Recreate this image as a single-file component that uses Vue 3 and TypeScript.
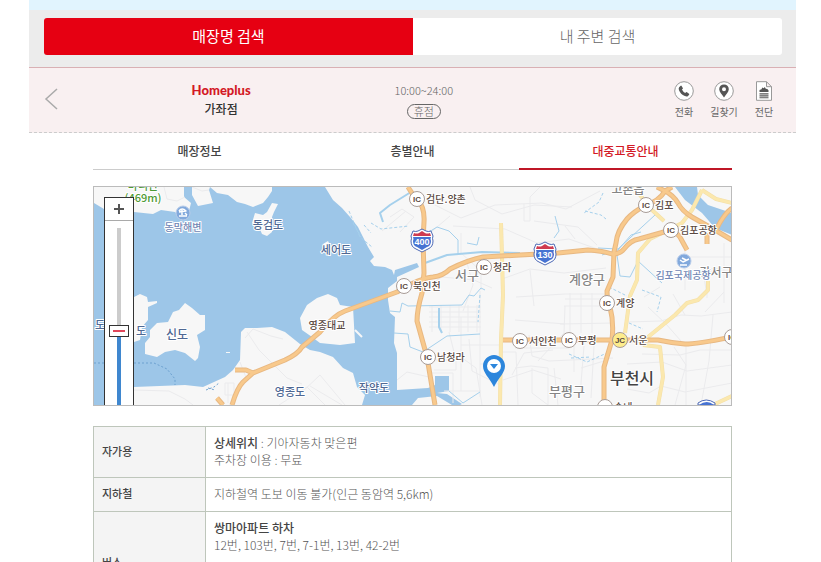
<script setup lang="ts">
import { ref } from 'vue'

interface MapLabel {
  text: string
  x: number
  y: number
  size: number
  kind: string
}

interface Junction {
  code: string
  name: string
  x: number
  y: number
}

interface TransitRow {
  heading: string
  title?: string
  inline?: string
  lines: string[]
  tall?: boolean
}

const searchTabs: string[] = ['매장명 검색', '내 주변 검색']
const activeSearch = ref(0)

const infoTabs: string[] = ['매장정보', '층별안내', '대중교통안내']
const activeInfo = ref(2)

const zoomLevel = ref(50)

const labels: MapLabel[] = [
  { text: '마니산', x: 49, y: 3, size: 11, kind: 'peak' },
  { text: '(469m)', x: 49, y: 15, size: 11, kind: 'peak' },
  { text: '동막해변', x: 89, y: 44, size: 10, kind: 'spot' },
  { text: '동검도', x: 174, y: 42, size: 11, kind: 'isle' },
  { text: '세어도', x: 242, y: 67, size: 11, kind: 'isle' },
  { text: '도', x: 6, y: 142, size: 11, kind: 'isle' },
  { text: '도', x: 47, y: 148, size: 11, kind: 'isle' },
  { text: '신도', x: 83, y: 152, size: 12, kind: 'isle' },
  { text: '영종도', x: 196, y: 209, size: 11, kind: 'isle' },
  { text: '작약도', x: 280, y: 205, size: 11, kind: 'isle' },
  { text: '영종대교', x: 233, y: 142, size: 10, kind: 'road' },
  { text: '서구', x: 373, y: 93, size: 13, kind: 'district' },
  { text: '고촌읍', x: 534, y: 7, size: 12, kind: 'district' },
  { text: '계양구', x: 493, y: 97, size: 13, kind: 'district' },
  { text: '강서구', x: 622, y: 90, size: 12, kind: 'district' },
  { text: '김포국제공항', x: 589, y: 92, size: 10, kind: 'spot' },
  { text: '부평구', x: 473, y: 209, size: 13, kind: 'district' },
  { text: '부천시', x: 538, y: 197, size: 16, kind: 'city' },
]

const junctions: Junction[] = [
  { code: 'IC', name: '검단.양촌', x: 323, y: 12 },
  { code: 'IC', name: '청라', x: 390, y: 80 },
  { code: 'IC', name: '북인천', x: 310, y: 99 },
  { code: 'IC', name: '남청라', x: 334, y: 170 },
  { code: 'IC', name: '김포', x: 552, y: 18 },
  { code: 'IC', name: '김포공항', x: 577, y: 43 },
  { code: 'IC', name: '계양', x: 513, y: 116 },
  { code: 'IC', name: '서인천', x: 426, y: 154 },
  { code: 'IC', name: '부평', x: 475, y: 153 },
  { code: 'JC', name: '서운', x: 526, y: 153 },
  { code: 'IC', name: '송내', x: 511, y: 220 },
  { code: 'IC', name: '', x: 638, y: 150 },
]

const rows: TransitRow[] = [
  { heading: '자가용', title: '상세위치', inline: ' : 기아자동차 맞은편', lines: ['주차장 이용 : 무료'] },
  { heading: '지하철', lines: ['지하철역 도보 이동 불가(인근 동암역 5,6km)'] },
  { heading: '버스', title: '쌍마아파트 하차', lines: ['12번, 103번, 7번, 7-1번, 13번, 42-2번'], tall: true },
]
</script>

<template>
  <main class="page">
    <div class="strip"></div>
    <nav class="search">
      <button
        v-for="(tab, i) in searchTabs"
        :key="tab"
        type="button"
        class="search-tab"
        :class="{ active: activeSearch === i }"
        @click="activeSearch = i"
      >{{ tab }}</button>
    </nav>

    <header class="store">
      <button type="button" class="back" aria-label="이전">
        <svg width="14" height="22" viewBox="0 0 14 22"><path d="M13 1 2 11l11 10" /></svg>
      </button>
      <div class="store-name">
        <span class="brand">Homeplus</span>
        <h1>가좌점</h1>
      </div>
      <div class="hours">
        <span>10:00~24:00</span>
        <span class="closed">휴점</span>
      </div>
      <div class="actions">
        <a href="#call">
          <svg width="20" height="20" viewBox="0 0 20 20">
            <circle class="ring" cx="10" cy="10" r="9.3" />
            <path class="solid" d="M5.1 6.2 6.7 4.7q.5-.3.9.2l1.2 2q.3.5-.2 1l-.7.7q1.2 2.4 3.3 3.4l.8-.7q.5-.4 1 0l2 1.5q.5.4.1.9l-1.1 1.2q-1 1-3.2.1-4.3-1.9-5.8-5.8-.7-2 .1-3z" />
          </svg>
          <span>전화</span>
        </a>
        <a href="#route">
          <svg width="20" height="20" viewBox="0 0 20 20">
            <circle class="ring" cx="10" cy="10" r="9.3" />
            <path class="solid" fill-rule="evenodd" d="M10 3.6c-2.8 0-4.8 2-4.8 4.6 0 2.8 2.8 5.2 4.8 8.3 2-3.1 4.8-5.500 4.800-8.300 0-2.600-2-4.600-4.800-4.600zm0 2.600a2 2 0 1 1 0 4 2 2 0 0 1 0-4z" />
          </svg>
          <span>길찾기</span>
        </a>
        <a href="#leaflet">
          <svg width="20" height="20" viewBox="0 0 20 20">
            <path class="ring" d="M2.5.7h10l5 5v13.600h-15zM12.500.7v5h5" />
            <path class="solid" d="M5.500 11V9l2-.7.8-1.800 1.500.8.900-1.300 1.300 2 1-.2 1.500 1.500V11zM5.500 12.200h9v1.200h-9zM5.500 14.200h9v1.200h-9zM5.500 16.200h9v1h-9z" />
          </svg>
          <span>전단</span>
        </a>
      </div>
    </header>

    <section class="content">
      <nav class="tabs">
        <button
          v-for="(tab, i) in infoTabs"
          :key="tab"
          type="button"
          :class="{ active: activeInfo === i }"
          @click="activeInfo = i"
        >{{ tab }}</button>
      </nav>

      <div class="map">
        <svg class="canvas" viewBox="0 0 638 218" preserveAspectRatio="xMinYMin slice">
          <rect class="land" width="638" height="218" />

          <path class="sea" d="M0 16 10 22 24 25 40 25 59 27 67 23 74 24 81 25 88 33 94 28 97 16 90 10 90 0H98L98 8 104 19 119 16 115 3 116 0 123 6 134 8 143 15 151 17 159 20 169 16 174 10 178 4 178 0H231L239 13 248 21 256 30 264 40 269 50 274 60 280 70 276 74 280 79 291 80 298 83 300 88 301 83 323 76 325 80 303 90 303 94 294 101 294 113 296 126 301 130 300 156 303 166 303 203 334 201 341 198V189H355V204L343 206 353 207 368 217 366 218H358L343 209 324 211 318 218H268L271 208 263 200 259 186 249 181 239 170 226 165 216 163 206 157 191 145 178 140 163 141 151 141 147 145 146 173 139 183 131 190 109 200 91 198 40 200 20 205 12 218H0z" />
          <path class="sea" d="M581 0 591 13 608 26 621 41 638 48V26L614 18 604 8 603 0z" />
          <path class="land" d="m91 116 7 5 8 7h5v15l-8 5 3 12-2 11-3 3-10-8-10-3-10 2-8 5-12-3v-11l5-6v-7l7-7 11-1 5-10 6-2zM40 110l6-3 7 3 1 5 9-1v2l-9 4v13l-6 7-2 13-6 2zM206 131l7-13 10-7 11-4 9 4 3 7 13 2 2 36-15 2-20-2-8-6-10-7zM184 17l-6-1-5 9-4 3-8-2-3 10 7 4 3 7 5 2 5-4v-15l2-5zM229 57l5-3 2 4-4 2zM132 165h4v1h-4z" />
          <path class="spit" d="m261 143 7 7" />

          <path class="lane" d="M98 0 108 4 115 3M70 0l3 12 10 2 8-4M40 203l35 1 16 8 8 6M146 175l7 18M151 151l8-9 18 7 12 3M153 145l12 18 28 28 15 6M134 196v20M131 196h9v12h-9zM185 218l28-18 18 18M206 207l20-19 25 30M216 199l32 19M296 30l12-8 12 8-14 15M288 44l24-20M303 193l10-8 22 5M334 186h25v30M340 173h22v10h-22M386 104v106M367 130v74M367 158h40M355 145l5 20 22 16 6 37M375 152l3 32 28 14M350 204h37M386 177h18M408 165h14l2 53M409 193l30-10 28 9M418 188l12-22 29-3M421 181l16-2 17 2v37M438 181v25l16 12M464 218l-4-37M333 14l34 17 34-13 47-2 24 6 34-18M376 0l5 13 27 14 32-9 38 2M430 17v17h6V10l10-10M336 46l20-17M359 39l52 3 32 14 32-4 34 12M440 34l44 6 19 18M471 39l10 13M367 46v20l20 18v19M373 76l6 22-10 26M408 92l28-10 34 4 42-5M436 83l4 36M332 100l16-10 32 3 18 8M422 110l49-3M471 107h42M471 112h42M476 106v40M487 106v40M498 106v40M470 119h42M466 137l54-1M471 119l-1 27-26 28M421 133l50 4M435 148l3 21 17 5 64-3M480 159v26M490 159l-4 50M500 159l-3 52M421 161h54M487 181l23-7M533 135l34-1 20-6 20 1 31-4M548 167l38 1 20-5h32M533 177l35-2 25 9 45-6M533 202l22 4 12-7 24 6 47-9M592 159v59M619 128l-4 46-8 44M580 160l12 18-11 40M554 120l18 17 15 17M550 110l16-10M591 128l-12-21M630 105l-19 20M612 103l-3-21 29-1M591 64v39M592 70h46M593 84h44M630 56v60M613 86v25" />
          <path class="lane" d="M335 120h52M335 125h52M335 130h52M335 135h52M335 140h52M338 118v27M347 118v27M356 118v27M365 118v27M374 118v27M383 118v27" />

          <path class="stream wide" d="m317 5-21 13-10 8 3 9M331 76l22-8 35-3 38 1M345 121v19l3 6" />
          <path class="stream" d="m296 124 10 1 2-9 6 3 54-1M300 146l14 1 2 13 13 5 9-6 15-10 33-2M355 204l14 12 17-11M368 118l7-10 5 1 7-8 4 2M335 45l8-5 12 4 9 9v15M373 56l10 2 2-8M504 61l20 1 37-34M508 68l16-5 13-15 10-3M523 68l3 21 10 1 8-16 24 22M461 29l4 15-5 7" />
          <path class="stream dash" d="M259 36l8 14M255 24l11 26 12 10M270 38l7 8M277 36l10 6 28-3M386 108l-2 27M509 6l-4 9-15 11M491 24l16 4 5 4M475 167l18 8 22-10M477 171l20-1M535 136l14 6M548 103l19 7-4 15M515 100l18 9" />
          <path class="ferry" d="M0 176h60l13 6 8 10v6M112 203l8-3 5-4M114 201l7 2" />

          <path class="yellow-case" d="m407 36 1 34 1 38-2 45-1 65M608 3l-10 20-10 13-20 10-12 6-12 14-1 27-7 16-5 37M554 150l27-22 12-12 11-3 10-10v-9M549 158l17 2 3 30-5 28M536 0l10 8 12 15 12 11M608 3l14 9 16 4M621 217l17-8" />
          <path class="yellow" d="m407 36 1 34 1 38-2 45-1 65M608 3l-10 20-10 13-20 10-12 6-12 14-1 27-7 16-5 37M554 150l27-22 12-12 11-3 10-10v-9M549 158l17 2 3 30-5 28M536 0l10 8 12 15 12 11M608 3l14 9 16 4M621 217l17-8" />
          <g v-for="layer in ['orange-case', 'orange']" :key="layer" :class="layer">
            <path d="M138 218q5-17 11-23l10-9 32-13q13-6 17-13l18-15q14-17 25-21l52-19q23-14 36-15 10-1 17-8 18-9 33-12l37-2 38-2 30-3q15 1 24 4 8 0 12-5 7-9 15-10l32-9q7 3 10 9l6 11" />
            <path d="M141 183h11l7 3M123 211l6 7M314 0q4 7 9 12 8 8 7 23l-1 18 1 33-2 20q-5 17-5 28l10 36 8 48" />
            <path d="m563 0 8 4q-6 10-19 14-13 7-19 14-10 12-11 24l-2 9-1 25-6 14q0 9 3 16 4 15 2 33l-8 27v38M578 0l-7 4q8 4 13 12 4 8 14 14l23 13 17 10M638 21q-8 6-15 20M613 46v11M409 153h155q14 3 27 4 12 0 47-7" />
          </g>

          <g v-for="shield in [{ no: '400', x: 328, y: 54 }, { no: '130', x: 451, y: 67 }]" :key="shield.no">
            <g :transform="`translate(${shield.x} ${shield.y})`">
              <path class="shield-edge" d="M-9-10q3 1 5 0l4-2 4 2q2 1 5 0l2 5q-1 2 0 5 0 6-5 8L0 11-6 8q-5-2-5-8 1-3 0-5z" />
              <path class="shield" d="M-9-4H9q-1 2 0 4 0 5-4 6L0 9-5 6q-4-1-4-6 1-2 0-4z" />
              <path class="shield-top" d="M-8-8q3 1 5 0l3-2 3 2q2 1 5 0l1 3H-9z" />
              <text class="shield-no" y="4">{{ shield.no }}</text>
            </g>
          </g>

          <circle class="poi" cx="89" cy="26" r="7" />
          <path class="poi-mark" d="M85 29h8M88 28v-5M85 24q3-4 7 0l-7 1M91 26l2 2" />
          <circle class="poi" cx="590" cy="74" r="7" />
          <path class="poi-mark" d="m586 73 3 2 6-3M588 71l4 2M586 78h7" />

          <text
            v-for="label in labels"
            :key="label.text + label.x"
            :x="label.x"
            :y="label.y"
            :font-size="label.size"
            class="label"
            :class="label.kind"
          >{{ label.text }}</text>

          <g v-for="j in junctions" :key="j.name + j.x">
            <circle class="junction" :class="{ jc: j.code === 'JC' }" :cx="j.x" :cy="j.y" r="7.5" />
            <text class="code" :x="j.x" :y="j.y + 3">{{ j.code }}</text>
            <text class="label road start" :x="j.x + 9" :y="j.y + 4" font-size="10">{{ j.name }}</text>
          </g>

          <path class="shield-edge" d="M604 218v-2q8-6 17 0v2z" />
          <path class="shield" d="M605 218q8-6 15 0z" />
          <path class="pin" d="M400 168c-6 0-11 5-11 11 0 7 6 11 11 21 5-10 11-14 11-21 0-6-5-11-11-11z" />
          <circle cx="400" cy="179" r="7" fill="#fff" />
          <path class="pin" d="M396 177h8l-4 5z" />
        </svg>

        <div class="zoom">
          <button type="button" aria-label="확대" @click="zoomLevel = Math.min(100, zoomLevel + 10)">
            <svg width="12" height="12" viewBox="0 0 12 12"><path d="M6 1v10M1 6h10" /></svg>
          </button>
          <input v-model.number="zoomLevel" type="range" min="0" max="100" aria-label="지도 배율" />
        </div>
      </div>

      <table>
        <tbody>
          <tr v-for="row in rows" :key="row.heading" :class="{ tall: row.tall }">
            <th scope="row">{{ row.heading }}</th>
            <td>
              <p v-if="row.title"><strong>{{ row.title }}</strong>{{ row.inline }}</p>
              <p v-for="line in row.lines" :key="line">{{ line }}</p>
            </td>
          </tr>
        </tbody>
      </table>
    </section>
  </main>
</template>

<style>
html {
  scrollbar-width: none;
}
body {
  background: #fff;
}
</style>

<style scoped>
.page {
  margin: 0 25px 0 29px;
  color: #555;
  font-family: "Noto Sans CJK KR", sans-serif;
  font-size: 11px;
  line-height: 17px;
}
button {
  padding: 0;
  border: 0;
  background: none;
  color: inherit;
  font: inherit;
  cursor: pointer;
}
.strip {
  height: 10px;
  background: #e1f4fe;
}
.search {
  display: flex;
  padding: 8px 14px 12px 15px;
  background: #ececec;
}
.search-tab {
  flex: 1;
  height: 37px;
  padding-bottom: 3px;
  background: #fff;
  color: #666;
  font-size: 15px;
  font-weight: 300;
}
.search-tab:first-child {
  border-radius: 3px 0 0 3px;
}
.search-tab:last-child {
  border-radius: 0 3px 3px 0;
}
.search-tab.active {
  background: #e60012;
  color: #fff;
  font-weight: 400;
}
.store {
  display: grid;
  grid-template-columns: 30px 44fr 11fr 45fr;
  align-items: center;
  height: 64px;
  border-top: 1px solid #d9b0b4;
  border-bottom: 1px dashed #ccc;
  background: #f9f0f1;
}
.back {
  display: flex;
  padding: 0 0 2px 15px;
}
.back path {
  fill: none;
  stroke: #aaa;
  stroke-width: 1.5;
}
.store-name,
.hours {
  display: flex;
  flex-direction: column;
  align-items: center;
}
.brand {
  color: #d31925;
  font-family: Lato, sans-serif;
  font-size: 13px;
  font-weight: 900;
}
h1 {
  margin: 0;
  color: #333;
  font-size: 12px;
  line-height: 20px;
  font-weight: 500;
}
.hours {
  gap: 5px;
  color: #666;
  font-weight: 300;
  white-space: nowrap;
}
.closed {
  padding: 0 6px;
  border: 1px solid #666;
  border-radius: 8px;
  line-height: 13px;
}
.actions {
  display: flex;
  justify-content: flex-end;
  padding-right: 12px;
}
.actions a {
  display: flex;
  flex-direction: column;
  align-items: center;
  gap: 2px;
  width: 40px;
  color: #666;
  font-size: 10px;
  text-decoration: none;
}
.ring {
  fill: #fff;
  stroke: #999;
}
.solid {
  fill: #555;
}
.content {
  padding: 0 64px;
}
.tabs {
  display: flex;
  height: 37px;
  margin-bottom: 16px;
  box-shadow: inset 0 -1px #ccc;
}
.tabs button {
  flex: 1;
  border-bottom: 2px solid transparent;
  color: #444;
  font-size: 12px;
  font-weight: 500;
}
.tabs .active {
  border-color: #bf1626;
  color: #d31925;
}
.map {
  position: relative;
  height: 218px;
  overflow: hidden;
  border: 1px solid #bbb;
}
.canvas {
  display: block;
  width: 100%;
  height: 100%;
}
.canvas path {
  stroke-linejoin: round;
}
.land {
  fill: #f7f7f7;
}
.sea {
  fill: #9dc6e8;
}
.spit {
  fill: none;
  stroke: #f7f7f7;
  stroke-width: 2;
}
.lane,
.stream,
.ferry,
.yellow,
.yellow-case,
.orange,
.orange-case {
  fill: none;
}
.lane {
  stroke: #ebebed;
}
.stream {
  stroke: #a5d0ec;
}
.wide {
  stroke-width: 2;
}
.dash {
  stroke-dasharray: 3 2;
}
.ferry {
  stroke: #6ca1d0;
  stroke-dasharray: 2 2;
}
.yellow-case {
  stroke: #f3dfa8;
  stroke-width: 4;
}
.yellow {
  stroke: #fbe8ae;
  stroke-width: 3;
}
.orange-case {
  stroke: #e8b882;
  stroke-width: 5;
}
.orange {
  stroke: #f8c98c;
  stroke-width: 3;
}
.shield-edge {
  fill: #fff;
  stroke: #4c68b5;
}
.shield {
  fill: #4773d2;
}
.shield-top {
  fill: #cf3b50;
}
.shield-no {
  fill: #fff;
  font-family: "Liberation Sans", sans-serif;
  font-size: 9px;
  font-weight: 700;
  text-anchor: middle;
}
.poi {
  fill: #82a9dc;
  stroke: #b9cdea;
}
.poi-mark {
  fill: none;
  stroke: #fff;
  stroke-width: 1.5;
}
.label {
  paint-order: stroke;
  stroke: #fff;
  stroke-width: 2;
  stroke-linejoin: round;
  font-weight: 500;
  text-anchor: middle;
}
.start {
  text-anchor: start;
}
.peak {
  fill: #4f9a35;
}
.spot {
  fill: #7086b4;
}
.isle {
  fill: #4f6893;
}
.road {
  fill: #594942;
}
.district {
  fill: #858585;
}
.city {
  fill: #444;
}
.junction {
  fill: #fff;
  stroke: #a89c97;
}
.jc {
  fill: #fdec8c;
}
.code {
  fill: #594942;
  font-family: "Liberation Sans", sans-serif;
  font-size: 8px;
  font-weight: 700;
  text-anchor: middle;
}
.pin {
  fill: #2c86dc;
}
.zoom {
  position: absolute;
  top: 10px;
  left: 10px;
  display: flex;
  flex-direction: column;
  align-items: center;
  box-sizing: border-box;
  width: 30px;
  height: 260px;
  border: 1px solid #333;
  background: #fff;
}
.zoom button {
  display: grid;
  place-items: center;
  flex: none;
  width: 100%;
  height: 23px;
  margin-bottom: 7px;
  border-bottom: 1px solid #aaa;
}
.zoom button path {
  stroke: #555;
  stroke-width: 2;
}
.zoom input {
  width: 20px;
  height: 206px;
  margin: 0;
  appearance: none;
  background: none;
  writing-mode: vertical-lr;
  direction: rtl;
}
.zoom input::-webkit-slider-runnable-track {
  width: 4px;
  background: linear-gradient(#ccc 50%, #3f87cf 50%);
}
.zoom input::-webkit-slider-thumb {
  appearance: none;
  box-sizing: border-box;
  width: 20px;
  height: 12px;
  margin-left: -8px;
  border: 1px solid #333;
  background: linear-gradient(#e0475b, #e0475b) center / 12px 2px no-repeat #fff;
}
table {
  width: 100%;
  margin-top: 20px;
  border-collapse: collapse;
  table-layout: fixed;
  font-size: 12px;
}
th,
td {
  padding: 7px 8px 9px;
  border: 1px solid #bec6bb;
  text-align: left;
}
th {
  width: 95px;
  background: #f4f4f4;
  color: #444;
  font-size: 11px;
  font-weight: 500;
}
td {
  font-weight: 300;
}
td p {
  margin: 0;
}
strong {
  color: #444;
  font-weight: 500;
}
.tall {
  height: 103px;
}
.tall td {
  vertical-align: top;
}
</style>
